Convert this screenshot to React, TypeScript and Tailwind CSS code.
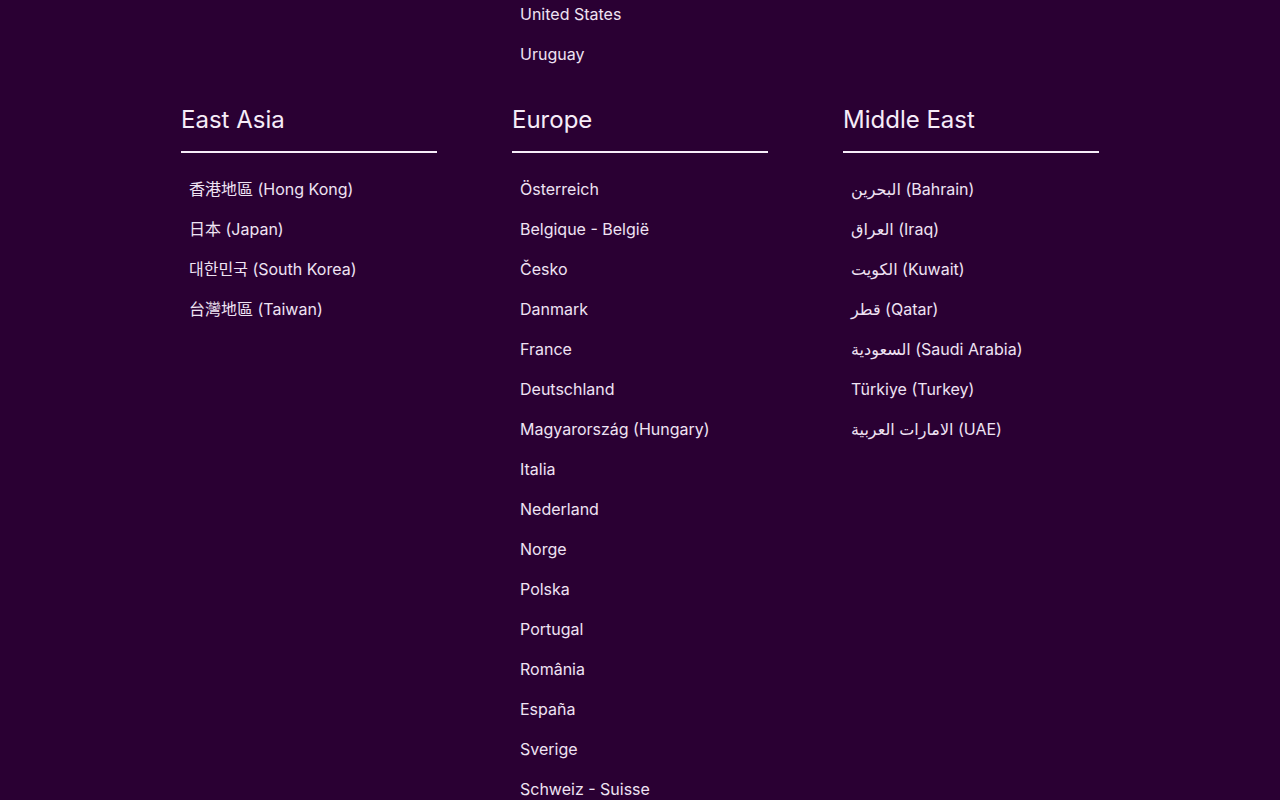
const eastAsia = ['香港地區 (Hong Kong)', '日本 (Japan)', '대한민국 (South Korea)', '台灣地區 (Taiwan)'];

const europe = [
  'Österreich',
  'Belgique - België',
  'Česko',
  'Danmark',
  'France',
  'Deutschland',
  'Magyarország (Hungary)',
  'Italia',
  'Nederland',
  'Norge',
  'Polska',
  'Portugal',
  'România',
  'España',
  'Sverige',
  'Schweiz - Suisse',
];

const middleEast = [
  'البحرين (Bahrain)',
  'العراق (Iraq)',
  'الكويت (Kuwait)',
  'قطر (Qatar)',
  'السعودية (Saudi Arabia)',
  'Türkiye (Turkey)',
  'الامارات العربية (UAE)',
];

function Region({ title, items }: { title: string; items: string[] }) {
  return (
    <div>
      <h2 className="text-2xl leading-8 text-[#f6ecf8] border-b-2 border-[#f6ecf8] pb-[15px]">{title}</h2>
      <ul className="mt-4">
        {items.map((item) => (
          <li key={item} className="py-2 pl-2 text-base leading-6 text-[#efe3f3]">
            {item}
          </li>
        ))}
      </ul>
    </div>
  );
}

export default function App() {
  return (
    <div
      className="h-[800px] overflow-hidden bg-[#2a0033]"
      style={{ fontFamily: 'Inter, "Noto Sans", "Noto Sans CJK TC", "Noto Sans CJK KR", "DejaVu Sans", sans-serif' }}
    >
      <div className="w-[918px] mx-auto -mt-1.5">
        <div className="grid grid-cols-3 gap-x-[75px]">
          <div />
          <ul>
            {['United States', 'Uruguay'].map((item) => (
              <li key={item} className="py-2 pl-2 text-base leading-6 text-[#efe3f3]">{item}</li>
            ))}
          </ul>
          <div />
        </div>
        <div className="grid grid-cols-3 gap-x-[75px] mt-[30px]">
          <Region title="East Asia" items={eastAsia} />
          <Region title="Europe" items={europe} />
          <Region title="Middle East" items={middleEast} />
        </div>
      </div>
    </div>
  );
}
